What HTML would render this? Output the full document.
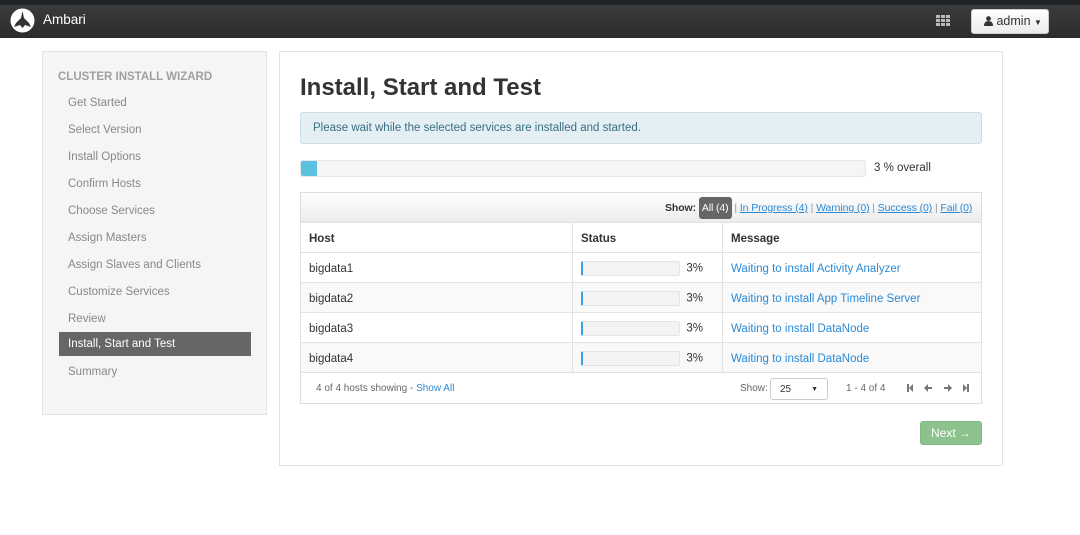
<!DOCTYPE html><html><head><style>
*{box-sizing:border-box;margin:0;padding:0}
body{width:1080px;height:535px;background:#fff;font-family:"Liberation Sans",sans-serif;font-size:12px;color:#333;position:relative;overflow:hidden}
.hdr{position:absolute;left:0;top:0;width:1080px;height:38px;background:linear-gradient(#3b3b3b,#2c2c2c);border-top:5px solid #1f2326}
.abs{position:absolute}
.side{left:42px;top:51px;width:225px;height:364px;background:#f5f5f5;border:1px solid #e3e3e3}
.side .t{position:absolute;left:15px;top:19px;font-size:11.5px;font-weight:bold;color:#a0a0a0}
.side .i{position:absolute;left:16px;width:192px;height:24px;line-height:24px;padding-left:9px;color:#888;font-size:11.5px}
.main{left:279px;top:51px;width:724px;height:415px;border:1px solid #e3e3e3}
a,.lnk{color:#2b8ad6}
table{border-collapse:collapse;position:absolute;left:300px;top:222px;width:682px}
td{border:1px solid #e2e2e2;height:30px;padding-left:8px;font-size:11.5px;padding-top:2px}
.pb{display:inline-block;width:99px;height:15px;background:#f3f3f3;border:1px solid #e4e4e4;border-left:2px solid #3aa0e0;vertical-align:middle;border-radius:2px}
</style></head><body>
<div class="hdr">
<svg class="abs" style="left:10px;top:3px" width="25" height="25" viewBox="0 0 25 25"><circle cx="12.5" cy="12.5" r="12" fill="#fff"/><path d="M12.5 3 L14 10 L19 15 L21 19 L15 17 L12.5 20 L10 17 L4 19 L6 15 L11 10Z" fill="#333"/></svg>
<div class="abs" style="left:43px;top:7px;color:#fff;font-size:13.5px">Ambari</div>
<svg class="abs" style="left:936px;top:10px" width="15" height="12"><g fill="#bbb"><rect x="0" y="0" width="4" height="3"/><rect x="5" y="0" width="4" height="3"/><rect x="10" y="0" width="4" height="3"/><rect x="0" y="4" width="4" height="3"/><rect x="5" y="4" width="4" height="3"/><rect x="10" y="4" width="4" height="3"/><rect x="0" y="8" width="4" height="3"/><rect x="5" y="8" width="4" height="3"/><rect x="10" y="8" width="4" height="3"/></g></svg>
<div class="abs" style="left:971px;top:4px;width:78px;height:25px;background:linear-gradient(#fff,#ebebeb);border:1px solid #ccc;border-radius:3px;font-size:12.5px;line-height:23px;padding-left:12px;color:#333"><svg width="9" height="10" viewBox="0 0 9 10" style="vertical-align:-1px"><circle cx="4.5" cy="2.6" r="2.4" fill="#333"/><path d="M0 10 Q0 5 4.5 5 Q9 5 9 10Z" fill="#333"/></svg> admin <span style="font-size:8px">&#9660;</span></div>
</div>
<div class="abs side"><div class="t" style="top:19px">CLUSTER INSTALL WIZARD</div>
<div class="i" style="top:39px">Get Started</div>
<div class="i" style="top:66px">Select Version</div>
<div class="i" style="top:93px">Install Options</div>
<div class="i" style="top:120px">Confirm Hosts</div>
<div class="i" style="top:147px">Choose Services</div>
<div class="i" style="top:174px">Assign Masters</div>
<div class="i" style="top:201px">Assign Slaves and Clients</div>
<div class="i" style="top:228px">Customize Services</div>
<div class="i" style="top:255px">Review</div>
<div class="i" style="top:280px;background:#666;color:#fff">Install, Start and Test</div>
<div class="i" style="top:308px">Summary</div>
</div>
<div class="abs main"></div>
<div class="abs" style="left:300px;top:74px;font-size:24px;font-weight:bold;color:#333">Install, Start and Test</div>
<div class="abs" style="left:300px;top:112px;width:682px;height:32px;background:#e4eff4;border:1px solid #c8dde6;border-radius:3px;padding:9px 12px;color:#3a6e82;font-size:11.5px">Please wait while the selected services are installed and started.</div>
<div class="abs" style="left:300px;top:160px;width:566px;height:17px;background:#f5f5f5;border:1px solid #e6e6e6;border-radius:3px"><div style="width:16px;height:15px;background:#5bc0de;border-radius:2px 0 0 2px"></div></div>
<div class="abs" style="left:874px;top:162px;font-size:11.5px">3 % overall</div>
<div class="abs" style="left:300px;top:192px;width:682px;height:212px;border:1px solid #ddd"></div>
<div class="abs" style="left:301px;top:193px;width:680px;height:29px;background:linear-gradient(#fff,#ececec)"></div>
<div class="abs" style="left:665px;top:202px;font-size:10.5px;letter-spacing:-0.1px"><b>Show:</b> <span style="background:#666;color:#fff;padding:5px 3px;border-radius:3px">All (4)</span> <span style="color:#999">|</span> <u class="lnk">In Progress (4)</u> <span style="color:#999">|</span> <u class="lnk">Warning (0)</u> <span style="color:#999">|</span> <u class="lnk">Success (0)</u> <span style="color:#999">|</span> <u class="lnk">Fail (0)</u></div>
<table>
<tr style="font-weight:bold"><td style="width:272px">Host</td><td style="width:150px">Status</td><td>Message</td></tr>
<tr><td>bigdata1</td><td><span class="pb"></span>&nbsp;&nbsp;3%</td><td class="lnk">Waiting to install Activity Analyzer</td></tr>
<tr style="background:#f9f9f9"><td>bigdata2</td><td><span class="pb"></span>&nbsp;&nbsp;3%</td><td class="lnk">Waiting to install App Timeline Server</td></tr>
<tr><td>bigdata3</td><td><span class="pb"></span>&nbsp;&nbsp;3%</td><td class="lnk">Waiting to install DataNode</td></tr>
<tr style="background:#f9f9f9"><td>bigdata4</td><td><span class="pb"></span>&nbsp;&nbsp;3%</td><td class="lnk">Waiting to install DataNode</td></tr>
</table>
<div class="abs" style="left:316px;top:383px;font-size:10px;color:#666">4 of 4 hosts showing - <span class="lnk">Show All</span></div>
<div class="abs" style="left:740px;top:383px;font-size:10px;color:#666">Show:</div>
<div class="abs" style="left:770px;top:378px;width:58px;height:22px;border:1px solid #ccc;border-radius:3px;font-size:10px;padding:5px 9px">25<span style="float:right;font-size:7px;margin-top:2px">&#9660;</span></div>
<div class="abs" style="left:846px;top:383px;font-size:10px;color:#666">1 - 4 of 4</div>
<svg class="abs" style="left:906px;top:383px" width="64" height="10" viewBox="0 0 64 10"><g fill="#777"><rect x="1" y="1" width="2" height="8"/><path d="M3 5 L7 1 V9Z"/><path d="M18 5 L22 1 V4 H26 V6 H22 V9Z"/><path d="M46 5 L42 1 V4 H38 V6 H42 V9Z"/><path d="M61 5 L57 1 V9Z"/><rect x="61" y="1" width="2" height="8"/></g></svg>
<div class="abs" style="left:920px;top:421px;width:62px;height:24px;background:#8cc38c;border:1px solid #7fb97f;border-radius:3px;color:#fff;font-size:12px;line-height:22px;text-align:center">Next &#8594;</div>
</body></html>
